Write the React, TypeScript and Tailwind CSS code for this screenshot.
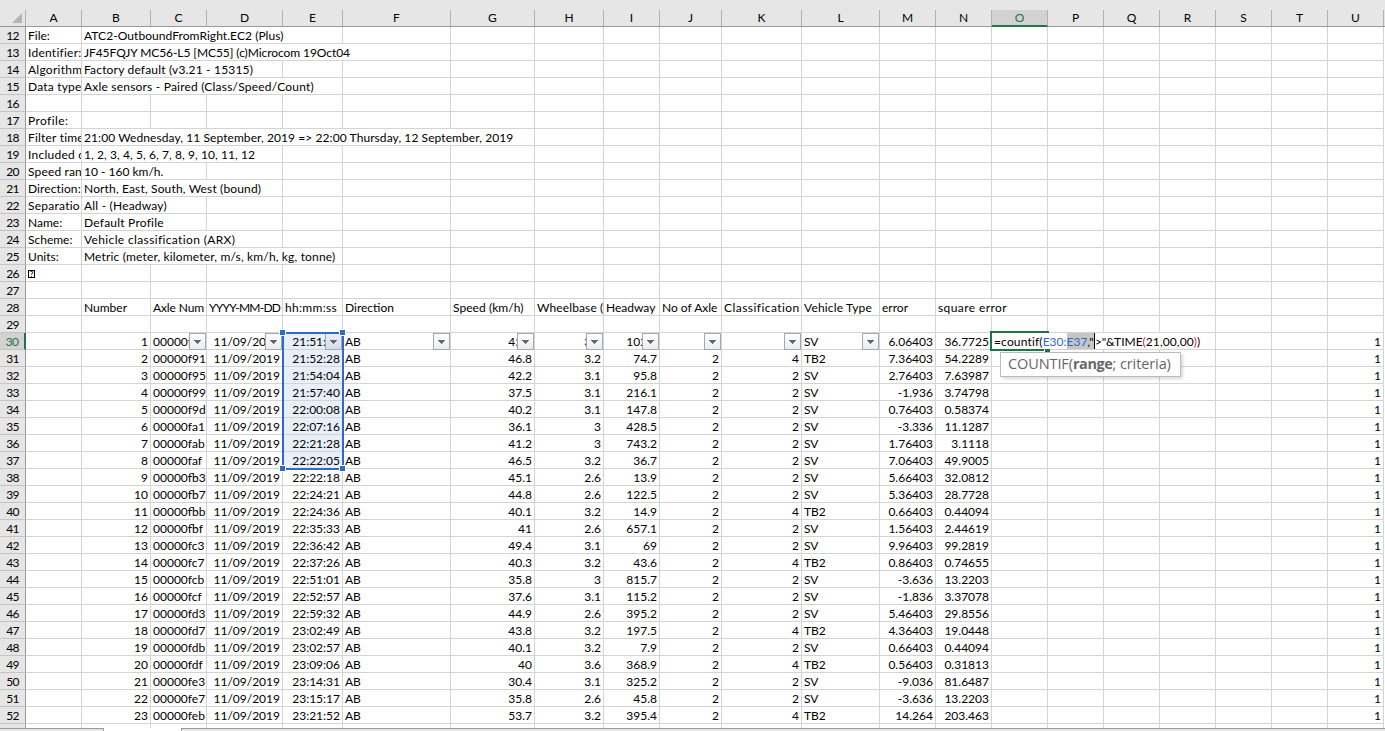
import { Fragment, type ReactNode } from "react";

const columns = [
  { id: "A", w: "w-[56px]" },
  { id: "B", w: "w-[69px]" },
  { id: "C", w: "w-[56px]" },
  { id: "D", w: "w-[76px]" },
  { id: "E", w: "w-[60px]" },
  { id: "F", w: "w-[108px]" },
  { id: "G", w: "w-[84px]" },
  { id: "H", w: "w-[69px]" },
  { id: "I", w: "w-[56px]" },
  { id: "J", w: "w-[62px]" },
  { id: "K", w: "w-[80px]" },
  { id: "L", w: "w-[78px]" },
  { id: "M", w: "w-[56px]" },
  { id: "N", w: "w-[56px]" },
  { id: "O", w: "w-[56px]" },
  { id: "P", w: "w-[56px]" },
  { id: "Q", w: "w-[56px]" },
  { id: "R", w: "w-[56px]" },
  { id: "S", w: "w-[56px]" },
  { id: "T", w: "w-[56px]" },
  { id: "U", w: "w-[56px]" },
];

type Cell = { text: ReactNode; span?: number; track?: string };
type Row = { n: number; cells: Record<string, Cell> };

const info: [string, string, string, number, string][] = [
  ["File:", "", "ATC2-OutboundFromRight.EC2 (Plus)", 4, "tracking-[0.06px]"],
  ["Identifier:", "tracking-[0.25px]", "JF45FQJY MC56-L5 [MC55] (c)Microcom 19Oct04", 5, "tracking-[-0.07px]"],
  ["Algorithm", "tracking-[0.25px]", "Factory default (v3.21 - 15315)", 3, "tracking-[0.18px]"],
  ["Data type", "tracking-[0.2px]", "Axle sensors - Paired (Class/Speed/Count)", 4, "tracking-[0.2px]"],
  ["", "", "", 1, ""],
  ["Profile:", "tracking-[0.4px]", "", 1, ""],
  ["Filter time", "tracking-[0.2px]", "21:00 Wednesday, 11 September, 2019 => 22:00 Thursday, 12 September, 2019", 6, "tracking-[0.08px]"],
  ["Included c", "tracking-[0.25px]", "1, 2, 3, 4, 5, 6, 7, 8, 9, 10, 11, 12", 3, "tracking-[0.08px]"],
  ["Speed ran", "tracking-[0.15px]", "10 - 160 km/h.", 2, ""],
  ["Direction:", "tracking-[0.1px]", "North, East, South, West (bound)", 3, "tracking-[0.15px]"],
  ["Separatio", "tracking-[0.25px]", "All - (Headway)", 2, "tracking-[0.2px]"],
  ["Name:", "", "Default Profile", 2, "tracking-[0.22px]"],
  ["Scheme:", "", "Vehicle classification (ARX)", 3, "tracking-[0.36px]"],
  ["Units:", "", "Metric (meter, kilometer, m/s, km/h, kg, tonne)", 4, "tracking-[0.16px]"],
];

const records = `1|00000f8d|11/09/2019|21:51:27|45.5|3.1|102.3|2|2|SV|6.06403|36.7725
2|00000f91|11/09/2019|21:52:28|46.8|3.2|74.7|2|4|TB2|7.36403|54.2289
3|00000f95|11/09/2019|21:54:04|42.2|3.1|95.8|2|2|SV|2.76403|7.63987
4|00000f99|11/09/2019|21:57:40|37.5|3.1|216.1|2|2|SV|-1.936|3.74798
5|00000f9d|11/09/2019|22:00:08|40.2|3.1|147.8|2|2|SV|0.76403|0.58374
6|00000fa1|11/09/2019|22:07:16|36.1|3|428.5|2|2|SV|-3.336|11.1287
7|00000fab|11/09/2019|22:21:28|41.2|3|743.2|2|2|SV|1.76403|3.1118
8|00000faf|11/09/2019|22:22:05|46.5|3.2|36.7|2|2|SV|7.06403|49.9005
9|00000fb3|11/09/2019|22:22:18|45.1|2.6|13.9|2|2|SV|5.66403|32.0812
10|00000fb7|11/09/2019|22:24:21|44.8|2.6|122.5|2|2|SV|5.36403|28.7728
11|00000fbb|11/09/2019|22:24:36|40.1|3.2|14.9|2|4|TB2|0.66403|0.44094
12|00000fbf|11/09/2019|22:35:33|41|2.6|657.1|2|2|SV|1.56403|2.44619
13|00000fc3|11/09/2019|22:36:42|49.4|3.1|69|2|2|SV|9.96403|99.2819
14|00000fc7|11/09/2019|22:37:26|40.3|3.2|43.6|2|4|TB2|0.86403|0.74655
15|00000fcb|11/09/2019|22:51:01|35.8|3|815.7|2|2|SV|-3.636|13.2203
16|00000fcf|11/09/2019|22:52:57|37.6|3.1|115.2|2|2|SV|-1.836|3.37078
17|00000fd3|11/09/2019|22:59:32|44.9|2.6|395.2|2|2|SV|5.46403|29.8556
18|00000fd7|11/09/2019|23:02:49|43.8|3.2|197.5|2|4|TB2|4.36403|19.0448
19|00000fdb|11/09/2019|23:02:57|40.1|3.2|7.9|2|2|SV|0.66403|0.44094
20|00000fdf|11/09/2019|23:09:06|40|3.6|368.9|2|4|TB2|0.56403|0.31813
21|00000fe3|11/09/2019|23:14:31|30.4|3.1|325.2|2|2|SV|-9.036|81.6487
22|00000fe7|11/09/2019|23:15:17|35.8|2.6|45.8|2|2|SV|-3.636|13.2203
23|00000feb|11/09/2019|23:21:52|53.7|3.2|395.4|2|4|TB2|14.264|203.463`
  .split("\n")
  .map((line) => line.split("|"));

const recordColumns = ["B", "C", "D", "E", "G", "H", "I", "J", "K", "L", "M", "N"];

const rows: Row[] = [
  ...info.map(([a, at, b, span, bt], i) => ({
    n: 12 + i,
    cells: { A: { text: a, track: at }, B: { text: b, span, track: bt } } as Record<string, Cell>,
  })),
  {
    n: 26,
    cells: {
      A: {
        text: (
          <span className="mt-[5px] flex h-[8px] w-[7px] items-center justify-center border border-black text-[7px] leading-none font-bold">
            ?
          </span>
        ),
      },
    },
  },
  { n: 27, cells: {} },
  {
    n: 28,
    cells: {
      B: { text: "Number" },
      C: { text: "Axle Num", track: "tracking-[-0.12px]" },
      D: { text: "YYYY-MM-DD", track: "tracking-[-0.75px]" },
      E: { text: "hh:mm:ss", track: "tracking-[0.3px]" },
      F: { text: "Direction" },
      G: { text: "Speed (km/h)", track: "tracking-[0.06px]" },
      H: { text: "Wheelbase (", track: "tracking-[0.12px]" },
      I: { text: "Headway" },
      J: { text: "No of Axle" },
      K: { text: "Classification", track: "tracking-[0.45px]" },
      L: { text: "Vehicle Type", track: "tracking-[0.16px]" },
      M: { text: "error" },
      N: { text: "square error", span: 2, track: "tracking-[0.4px]" },
    },
  },
  { n: 29, cells: {} },
  ...records.map((values, i) => {
    const cells: Record<string, Cell> = { F: { text: "AB" }, U: { text: "1" } };
    values.forEach((v, c) => (cells[recordColumns[c]] = { text: v }));
    return { n: 30 + i, cells };
  }),
];

const leftAligned = new Set(["C", "F", "L"]);
const filtered = new Set(["C", "D", "E", "F", "G", "H", "I", "J", "K", "L"]);

function FilterButton({ tint }: { tint: boolean }) {
  return (
    <span
      className={`absolute right-0 -bottom-px flex h-[17px] w-[17px] items-center justify-center border border-[#a3a8b1] bg-linear-to-b ${tint ? "from-[#e9eff9] to-[#d3dcec]" : "from-white to-[#e9ecf1]"}`}
    >
      <svg width="7" height="4" viewBox="0 0 7 4" shapeRendering="crispEdges">
        <path d="M0 0h7L3.5 4z" fill="#666" />
      </svg>
    </span>
  );
}

function SheetRow({ row }: { row: Row }) {
  const out: ReactNode[] = [];
  for (let i = 0; i < columns.length; ) {
    const col = columns[i];
    const cell = row.cells[col.id];
    const span = cell?.span ?? 1;
    const right = row.n >= 30 && !leftAligned.has(col.id);
    const shaded = col.id === "E" && row.n >= 30 && row.n <= 37;
    out.push(
      <div key={col.id} className={`relative flex shrink-0 border-r border-b border-[#d4d4d4] ${shaded ? "bg-[#e9eff9]" : ""}`}>
        {columns.slice(i, i + span).map((c, k) => (
          <div key={c.id} className={`${c.w} ${k === span - 1 ? "-mr-px" : ""} h-[16px] shrink-0`} />
        ))}
        <div className={`absolute inset-0 flex overflow-hidden pl-[2px] pr-[2px] whitespace-pre ${right ? "justify-end" : ""}`}>
          <span className={cell?.track ?? ""}>{cell?.text}</span>
        </div>
        {row.n === 30 && filtered.has(col.id) && <FilterButton tint={col.id === "E"} />}
      </div>,
    );
    i += span;
  }
  return <Fragment>{out}</Fragment>;
}

function Handle({ at }: { at: string }) {
  return <span className={`absolute h-[5px] w-[5px] bg-[#316ac5] ring-1 ring-white ${at}`} />;
}

export default function App() {
  return (
    <div className="relative flex h-[731px] w-[1385px] flex-col overflow-hidden bg-white font-['Lato',sans-serif] text-[12px] leading-[17px] text-black">
      <div className="h-[10px] shrink-0 bg-[#e6e6e6]" />
      <div className="flex h-[17px] shrink-0 border-b border-[#999] bg-[#e6e6e6] leading-[16px]">
        <div className="flex w-[26px] shrink-0 items-end justify-end border-r border-[#b1b1b1] pr-[3px] pb-[3px]">
          <svg width="10" height="10" viewBox="0 0 10 10">
            <path d="M10 0v10H0z" fill="#b4b4b4" />
          </svg>
        </div>
        {columns.map((c) => (
          <div
            key={c.id}
            className={`${c.w} shrink-0 border-r border-[#b1b1b1] text-center ${c.id === "O" ? "-mb-px border-b-2 border-b-[#217346] bg-[#d2d2d2] text-[#217346]" : ""}`}
          >
            {c.id}
          </div>
        ))}
      </div>
      <div className="h-[701px] shrink-0 overflow-hidden">
        {rows.map((row) => (
          <div key={row.n} className="flex h-[17px]">
            <div
              className={`w-[26px] shrink-0 border-b border-[#c4c4c4] text-center tracking-[-0.6px] ${row.n === 30 ? "border-r-2 border-r-[#217346] bg-[#d2d2d2] text-[#217346]" : "border-r border-r-[#999] bg-[#e6e6e6]"}`}
            >
              {row.n}
            </div>
            <SheetRow row={row} />
          </div>
        ))}
        <div className="flex h-[17px]">
          <div className="w-[26px] shrink-0 border-r border-[#999] bg-[#e6e6e6]" />
          {columns.map((c) => (
            <div key={c.id} className={`${c.w} shrink-0 border-r border-[#d4d4d4]`} />
          ))}
        </div>
      </div>
      <div className="flex h-[3px] shrink-0">
        <div className="w-[104px] border-t border-r border-[#999] bg-[#e6e6e6]" />
        <div className="w-[77px] bg-white" />
        <div className="flex-1 border-t border-l border-[#999] bg-[#e6e6e6]" />
      </div>

      <div className="absolute top-[332px] left-[282px] h-[138px] w-[62px] border-2 border-[#316ac5]">
        <Handle at="-top-[4px] -left-[4px]" />
        <Handle at="-top-[4px] -right-[3px]" />
        <Handle at="-bottom-[3px] -left-[4px]" />
        <Handle at="-bottom-[3px] -right-[3px]" />
      </div>

      <div className="absolute top-[333px] left-[992px] flex h-[16px] w-[223px] bg-white pl-[2px] whitespace-pre">
        <span className="tracking-[0.15px]">=countif(</span>
        <span className="text-[#316ac5]">E30:</span>
        <span className="bg-[#c6c6c6] text-[#316ac5]">E37</span>
        <span className="border-r border-black bg-[#c6c6c6] tracking-[0.3px]">,"</span>
        <span>&gt;"&amp;TIME</span>
        <span className="text-[#e0203c]">(</span>
        <span className="tracking-[0.1px]">21,00,00</span>
        <span className="text-[#e0203c]">)</span>
        <span>)</span>
      </div>
      <div className="absolute top-[331px] left-[990px] h-[20px] w-[54px] border-2 border-r-0 border-[#217346]" />
      <div className="absolute top-[331px] left-[1044px] h-[2px] w-[5px] bg-[#217346]" />
      <div className="absolute top-[349px] left-[1045px] h-[3px] w-[5px] bg-[#217346]" />
      <div className="absolute top-[352px] left-[1000px] flex h-[25px] w-[181px] items-center border border-[#bcbcbc] bg-white pb-[3px] pl-[7px] font-['Open_Sans',sans-serif] text-[14.5px] tracking-[-0.1px] whitespace-pre text-[#666] shadow-[2px_2px_3px_rgba(0,0,0,0.15)]">
        COUNTIF(<b className="tracking-[-0.4px]">range</b>; criteria)
      </div>
    </div>
  );
}
